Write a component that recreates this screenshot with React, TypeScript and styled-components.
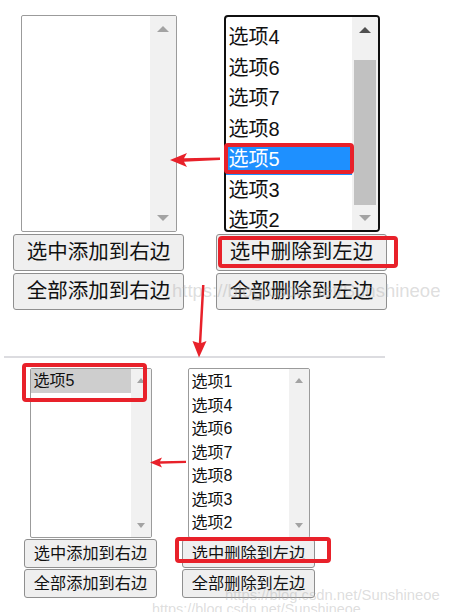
import React from 'react';
import styled, { createGlobalStyle } from 'styled-components';

const GlobalStyle = createGlobalStyle`
  html, body { margin: 0; padding: 0; background: #fff; }
  body { font-family: "Liberation Sans", "Noto Sans CJK SC", sans-serif; }
  #root { position: relative; width: 465px; height: 612px; overflow: hidden; }
`;

type Size = 'lg' | 'sm';
type Sel = 'none' | 'active' | 'inactive';

const sizes = {
  lg: { font: 20, btnFont: 20.5, item: 30.5, scroll: 26, arrowBox: 26, arrowW: 12, arrowH: 6, btnH: 37, gap: 2, colW: 171, boxW: 156, boxH: 217, padL: 3 },
  sm: { font: 16, btnFont: 16.2, item: 23.5, scroll: 20, arrowBox: 23, arrowW: 9, arrowH: 5, btnH: 29, gap: 1, colW: 133, boxW: 122, boxH: 170, padL: 3 },
};

const RED = '#e8212a';

const Page = styled.div`
  display: flex;
  flex-direction: column;
  width: 465px;
  height: 612px;
`;

const Row = styled.div<{ $size: Size }>`
  display: flex;
  gap: ${(p) => (p.$size === 'lg' ? 32 : 25)}px;
  margin: ${(p) => (p.$size === 'lg' ? '15px 0 0 13px' : '10px 0 0 24px')};
`;

const Column = styled.div<{ $size: Size }>`
  display: flex;
  flex-direction: column;
  align-items: center;
  gap: ${(p) => sizes[p.$size].gap}px;
  width: ${(p) => sizes[p.$size].colW}px;
`;

const ListBox = styled.div<{ $size: Size; $focused?: boolean }>`
  box-sizing: border-box;
  width: ${(p) => sizes[p.$size].boxW}px;
  height: ${(p) => sizes[p.$size].boxH}px;
  border: ${(p) => (p.$focused ? '2px solid #101010' : '1px solid #9b9b9b')};
  border-radius: ${(p) => (p.$focused ? 4 : 2)}px;
  background: #fff;
  display: flex;
  overflow: hidden;
`;

const Options = styled.div<{ $offset: number }>`
  flex: 1;
  min-width: 0;
  display: flex;
  flex-direction: column;
  padding-top: ${(p) => p.$offset}px;
  overflow: hidden;
`;

const Option = styled.div<{ $size: Size; $sel: Sel }>`
  flex: none;
  height: ${(p) => sizes[p.$size].item}px;
  line-height: ${(p) => sizes[p.$size].item}px;
  font-size: ${(p) => sizes[p.$size].font}px;
  padding-left: ${(p) => sizes[p.$size].padL}px;
  white-space: nowrap;
  color: ${(p) => (p.$sel === 'active' ? '#fff' : '#111')};
  background: ${(p) => (p.$sel === 'active' ? '#1e90ff' : p.$sel === 'inactive' ? '#cecece' : 'transparent')};
`;

const Scrollbar = styled.div<{ $size: Size }>`
  flex: none;
  width: ${(p) => sizes[p.$size].scroll}px;
  background: #f1f1f1;
  display: flex;
  flex-direction: column;
`;

const ArrowButton = styled.div<{ $size: Size }>`
  flex: none;
  height: ${(p) => sizes[p.$size].arrowBox}px;
  display: flex;
  align-items: center;
  justify-content: center;
`;

const Arrow = styled.div<{ $size: Size; $dir: 'up' | 'down'; $dark?: boolean }>`
  width: 0;
  height: 0;
  border-left: ${(p) => sizes[p.$size].arrowW / 2}px solid transparent;
  border-right: ${(p) => sizes[p.$size].arrowW / 2}px solid transparent;
  ${(p) =>
    p.$dir === 'up'
      ? `border-bottom: ${sizes[p.$size].arrowH}px solid ${p.$dark ? '#505050' : '#a3a3a3'};`
      : `border-top: ${sizes[p.$size].arrowH}px solid ${p.$dark ? '#505050' : '#a3a3a3'};`}
`;

const Track = styled.div`
  flex: 1;
  display: flex;
  flex-direction: column;
`;

const Thumb = styled.div<{ $offset: number; $length: number }>`
  margin: ${(p) => p.$offset}px 2px 0;
  height: ${(p) => p.$length}px;
  background: #c1c1c1;
`;

const Button = styled.button<{ $size: Size }>`
  box-sizing: border-box;
  width: ${(p) => sizes[p.$size].colW}px;
  height: ${(p) => sizes[p.$size].btnH}px;
  padding: 0;
  margin: 0;
  font-family: "Liberation Sans", "Noto Sans CJK SC", sans-serif;
  font-size: ${(p) => sizes[p.$size].btnFont}px;
  line-height: 1;
  color: #111;
  background: #efefef;
  border: 1px solid #8f8f8f;
  border-radius: 3px;
  display: flex;
  align-items: center;
  justify-content: center;
`;

const Separator = styled.div`
  flex: none;
  width: 381px;
  height: 2px;
  margin: 46px 0 0 4px;
  background: #dcdce0;
`;

const Overlay = styled.svg`
  position: absolute;
  left: 0;
  top: 0;
  pointer-events: none;
`;

const Watermark = styled.span<{ $x: number; $y: number; $fs: number }>`
  position: absolute;
  left: ${(p) => p.$x}px;
  top: ${(p) => p.$y}px;
  font-family: "Liberation Sans", sans-serif;
  font-size: ${(p) => p.$fs}px;
  line-height: 1;
  white-space: nowrap;
  color: rgba(170, 170, 170, 0.4);
  pointer-events: none;
`;

type ListProps = {
  size: Size;
  items: string[];
  selected?: number;
  selState?: Sel;
  focused?: boolean;
  offset?: number;
  thumb?: { offset: number; length: number };
  upDark?: boolean;
};

function List({ size, items, selected = -1, selState = 'none', focused, offset = 0, thumb, upDark }: ListProps) {
  return (
    <ListBox $size={size} $focused={focused}>
      <Options $offset={offset}>
        {items.map((t, i) => (
          <Option key={t} $size={size} $sel={i === selected ? selState : 'none'}>
            {t}
          </Option>
        ))}
      </Options>
      <Scrollbar $size={size}>
        <ArrowButton $size={size}>
          <Arrow $size={size} $dir="up" $dark={upDark} />
        </ArrowButton>
        <Track>{thumb && <Thumb $offset={thumb.offset} $length={thumb.length} />}</Track>
        <ArrowButton $size={size}>
          <Arrow $size={size} $dir="down" />
        </ArrowButton>
      </Scrollbar>
    </ListBox>
  );
}

const rightTop = ['选项4', '选项6', '选项7', '选项8', '选项5', '选项3', '选项2'];
const rightBottom = ['选项1', '选项4', '选项6', '选项7', '选项8', '选项3', '选项2'];
const WM = 'https://blog.csdn.net/Sunshineoe';

export default function App() {
  return (
    <>
      <GlobalStyle />
      <Page>
        <Row $size="lg">
          <Column $size="lg">
            <List size="lg" items={[]} />
            <Button $size="lg">选中添加到右边</Button>
            <Button $size="lg">全部添加到右边</Button>
          </Column>
          <Column $size="lg">
            <List
              size="lg"
              items={rightTop}
              selected={4}
              selState="active"
              focused
              offset={5}
              thumb={{ offset: 17, length: 145 }}
              upDark
            />
            <Button $size="lg">选中删除到左边</Button>
            <Button $size="lg">全部删除到左边</Button>
          </Column>
        </Row>
        <Separator />
        <Row $size="sm">
          <Column $size="sm">
            <List size="sm" items={['选项5']} selected={0} selState="inactive" offset={0} />
            <Button $size="sm">选中添加到右边</Button>
            <Button $size="sm">全部添加到右边</Button>
          </Column>
          <Column $size="sm">
            <List size="sm" items={rightBottom} offset={1} />
            <Button $size="sm">选中删除到左边</Button>
            <Button $size="sm">全部删除到左边</Button>
          </Column>
        </Row>
      </Page>
      <Watermark $x={172} $y={282} $fs={18.5}>{WM}</Watermark>
      <Watermark $x={225} $y={588} $fs={14.8}>{WM}</Watermark>
      <Watermark $x={152} $y={602} $fs={14.4}>{WM}</Watermark>
      <Overlay width={465} height={612} viewBox="0 0 465 612">
        <g fill={RED}>
          <polygon points="170,160 187,153 184,158.3 220,157.6 220,160 184,161.8 187,167" />
          <polygon points="202,285 204.5,285 201.3,343 206.5,341 199,357.5 192.5,341 198.8,343" />
          <polygon points="150,462.5 162,457.5 160,461.2 186,460.8 186,463 160,463.8 162,467.5" />
        </g>
        <g fill="none" stroke={RED} strokeWidth={4}>
          <rect x={226} y={145} width={126} height={27} rx={2} />
          <rect x={220} y={238} width={176} height={28} rx={2} />
          <rect x={24} y={365} width={121} height={35} rx={2} />
          <rect x={177} y={539} width={152} height={22} rx={2} />
        </g>
      </Overlay>
    </>
  );
}
